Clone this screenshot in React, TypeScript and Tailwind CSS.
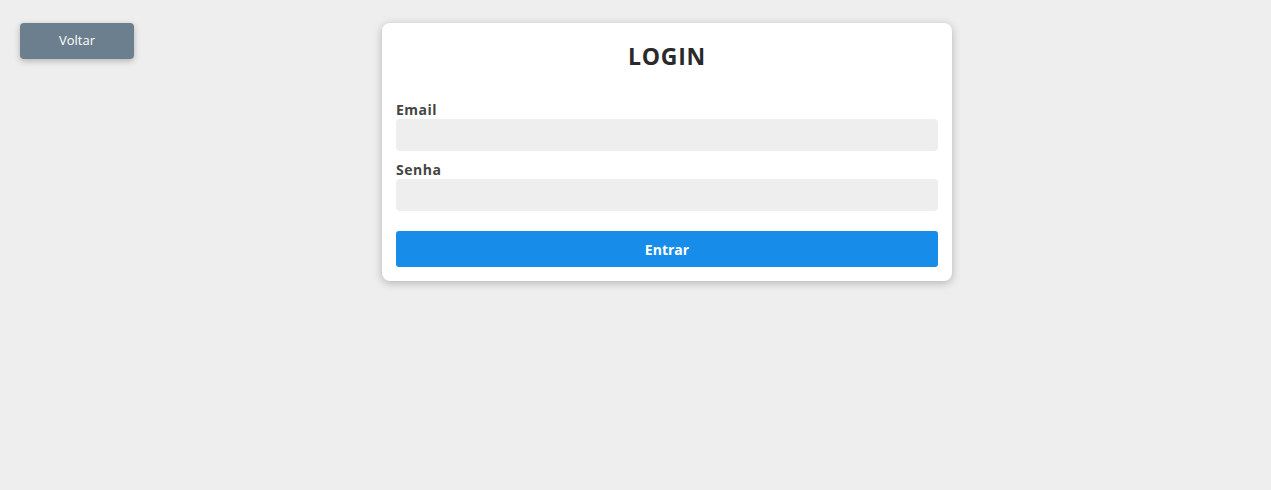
import React from "react";

const font = { fontFamily: "'Open Sans', 'Liberation Sans', sans-serif" };

const Field = ({ label, type }: { label: string; type: string }) => (
  <div className="flex flex-col">
    <label className="text-[14px] leading-[18px] font-bold text-[#444444] tracking-[0.5px]">{label}</label>
    <input type={type} className="h-[32px] rounded-[4px] bg-[#eeeeee] px-2 outline-none" />
  </div>
);

export default function App() {
  return (
    <div className="min-h-[490px] w-full bg-[#eeeeee] flex items-start pl-5 pt-[23px]" style={font}>
      <button className="w-[114px] h-[36px] rounded-[4px] bg-[#6c7f8e] text-white text-[13px] shadow-[0_2px_6px_rgba(0,0,0,0.25)]">
        Voltar
      </button>
      <div className="ml-[248px] w-[570px] bg-white rounded-[8px] shadow-[0_2px_8px_rgba(0,0,0,0.25)] px-[14px] pt-[18px] pb-[14px]">
        <h1 className="text-center text-[23px] leading-[30px] font-bold text-[#2a2a2a] tracking-[0.7px]">LOGIN</h1>
        <div className="mt-[30px] flex flex-col gap-[10px]">
          <Field label="Email" type="email" />
          <Field label="Senha" type="password" />
        </div>
        <button className="mt-[20px] w-full h-[36px] rounded-[3px] bg-[#188ce9] text-white text-[14px] font-bold">
          Entrar
        </button>
      </div>
    </div>
  );
}
